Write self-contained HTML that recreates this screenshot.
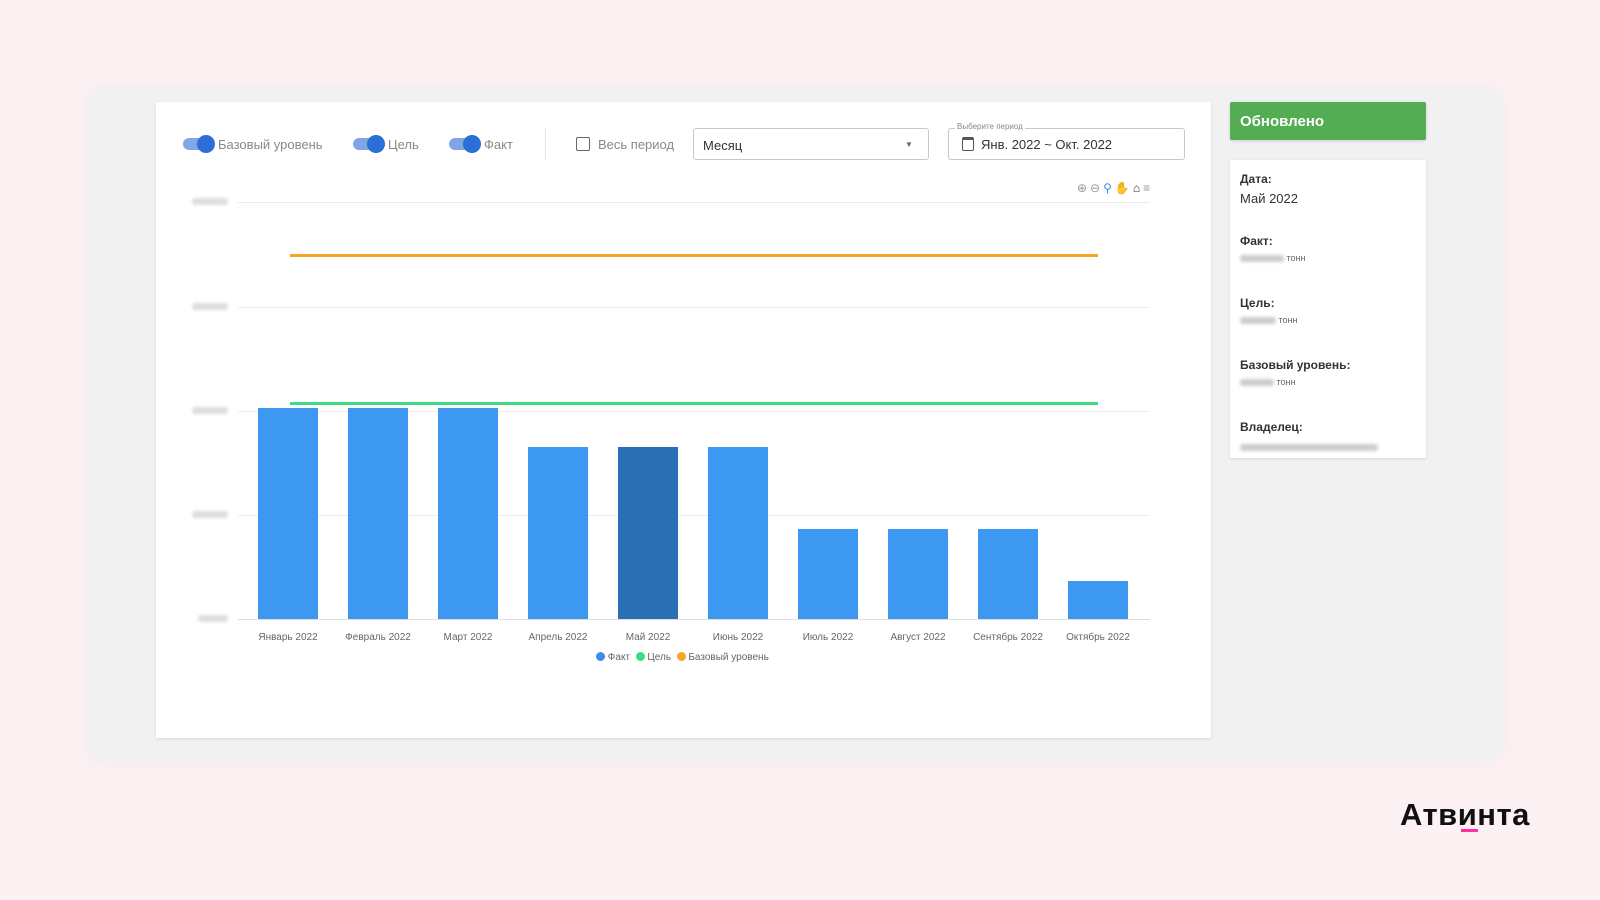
<!DOCTYPE html>
<html><head><meta charset="utf-8"><style>
*{margin:0;padding:0;box-sizing:border-box}
body{width:1600px;height:900px;background:#fdf2f3;font-family:"Liberation Sans",sans-serif;position:relative;overflow:hidden}
.abs{position:absolute}
.gray{left:87px;top:87px;width:1415px;height:676px;background:#f1f1f1;border-radius:18px;box-shadow:0 0 20px rgba(0,0,0,.04)}
.card{left:156px;top:102px;width:1055px;height:636px;background:#fff;box-shadow:0 1px 3px rgba(0,0,0,.1)}
.tog{width:30px;height:12px;border-radius:6px;background:#7fa7e6}
.tog::after{content:"";position:absolute;right:-2px;top:-3px;width:18px;height:18px;border-radius:50%;background:#2c6fd6}
.lbl{font-size:13px;color:#888}
.sel{border:1px solid #c8c8c8;border-radius:3px;background:#fff}
.xl{font-size:10px;color:#666;width:90px;text-align:center;top:632px}
.grid{left:238px;width:912px;height:1px;background:#ececec}
.bar{width:60px;background:#3d98f2;bottom:281px}
.yl{left:192px;width:36px;height:7px;background:#ddd;border-radius:3px;filter:blur(1.5px)}
.info b{display:block;font-size:12px;color:#333;margin-bottom:5px}
.blur{display:inline-block;height:7px;background:#ccc;border-radius:3px;filter:blur(1.5px);vertical-align:middle}
</style></head><body>
<div class="abs gray"></div>
<div class="abs card"></div>
<div class="abs tog" style="left:183px;top:138px"></div><div class="abs lbl" style="left:218px;top:137px">Базовый уровень</div>
<div class="abs tog" style="left:353px;top:138px"></div><div class="abs lbl" style="left:388px;top:137px">Цель</div>
<div class="abs tog" style="left:449px;top:138px"></div><div class="abs lbl" style="left:484px;top:137px">Факт</div>
<div class="abs" style="left:545px;top:128px;width:1px;height:32px;background:#e5e5e5"></div>
<div class="abs" style="left:576px;top:137px;width:14px;height:14px;border:1.5px solid #666;border-radius:2px"></div>
<div class="abs lbl" style="left:598px;top:137px">Весь период</div>
<div class="abs sel" style="left:693px;top:128px;width:236px;height:32px"></div>
<div class="abs" style="left:703px;top:138px;font-size:13px;color:#333">Месяц</div>
<div class="abs" style="left:905px;top:140px;font-size:8px;color:#666">▼</div>
<div class="abs sel" style="left:948px;top:128px;width:237px;height:32px"></div>
<div class="abs" style="left:955px;top:122px;background:#fff;padding:0 2px;font-size:8px;color:#888">Выберите период</div>
<div class="abs" style="left:962px;top:137px;width:12px;height:14px;border:1.5px solid #555;border-radius:2px;border-top-width:3px"></div>
<div class="abs" style="left:981px;top:137px;font-size:13px;color:#333">Янв. 2022 ~ Окт. 2022</div>
<div class="abs" style="left:1077px;top:181px;font-size:12px;color:#999;letter-spacing:3px">⊕⊖<span style="color:#3d8de8">⚲</span>✋<span style="color:#333">⌂</span>≡</div>
<div class="abs grid" style="top:202px"></div><div class="abs grid" style="top:307px"></div><div class="abs grid" style="top:411px"></div><div class="abs grid" style="top:515px"></div><div class="abs grid" style="top:619px;background:#ddd"></div>
<div class="abs yl" style="top:198px"></div><div class="abs yl" style="top:303px"></div><div class="abs yl" style="top:407px"></div><div class="abs yl" style="top:511px"></div><div class="abs yl" style="top:615px;left:198px;width:30px"></div>
<div class="abs bar" style="left:258px;top:408px"></div>
<div class="abs bar" style="left:348px;top:408px"></div>
<div class="abs bar" style="left:438px;top:408px"></div>
<div class="abs bar" style="left:528px;top:447px"></div>
<div class="abs bar" style="left:618px;top:447px;background:#2a6fb3"></div>
<div class="abs bar" style="left:708px;top:447px"></div>
<div class="abs bar" style="left:798px;top:529px"></div>
<div class="abs bar" style="left:888px;top:529px"></div>
<div class="abs bar" style="left:978px;top:529px"></div>
<div class="abs bar" style="left:1068px;top:581px"></div>
<div class="abs" style="left:290px;top:254px;width:808px;height:3px;background:#f5a623"></div>
<div class="abs" style="left:290px;top:402px;width:808px;height:3px;background:#3ddc84"></div>
<div class="abs xl" style="left:243px">Январь 2022</div><div class="abs xl" style="left:333px">Февраль 2022</div><div class="abs xl" style="left:423px">Март 2022</div><div class="abs xl" style="left:513px">Апрель 2022</div><div class="abs xl" style="left:603px">Май 2022</div><div class="abs xl" style="left:693px">Июнь 2022</div><div class="abs xl" style="left:783px">Июль 2022</div><div class="abs xl" style="left:873px">Август 2022</div><div class="abs xl" style="left:963px">Сентябрь 2022</div><div class="abs xl" style="left:1053px">Октябрь 2022</div>
<div class="abs" style="left:596px;top:652px;font-size:10px;color:#666;white-space:nowrap">
<span style="display:inline-block;width:9px;height:9px;border-radius:50%;background:#3d8de8;vertical-align:-1px"></span> Факт &nbsp;<span style="display:inline-block;width:9px;height:9px;border-radius:50%;background:#3ddc84;vertical-align:-1px"></span> Цель &nbsp;<span style="display:inline-block;width:9px;height:9px;border-radius:50%;background:#f5a623;vertical-align:-1px"></span> Базовый уровень</div>
<div class="abs" style="left:1230px;top:102px;width:196px;height:38px;background:#53ad52;border-radius:2px;color:#fff;font-weight:bold;font-size:15px;padding:11px 10px;box-shadow:0 1px 3px rgba(0,0,0,.15)">Обновлено</div>
<div class="abs info" style="left:1230px;top:160px;width:196px;height:298px;background:#fff;border-radius:2px;box-shadow:0 1px 3px rgba(0,0,0,.12);padding:12px 10px">
<b>Дата:</b><div style="font-size:13px;color:#333;height:43px">Май 2022</div>
<b>Факт:</b><div style="font-size:9px;color:#666;height:43px"><span class="blur" style="width:44px"></span> тонн</div>
<b>Цель:</b><div style="font-size:9px;color:#666;height:43px"><span class="blur" style="width:36px"></span> тонн</div>
<b>Базовый уровень:</b><div style="font-size:9px;color:#666;height:43px"><span class="blur" style="width:34px"></span> тонн</div>
<b>Владелец:</b><div><span class="blur" style="width:138px"></span></div>
</div>
<div class="abs" style="left:1400px;top:797px;font-size:31px;font-weight:bold;color:#111;letter-spacing:0.5px">Атвинта</div>
<div class="abs" style="left:1461px;top:829px;width:17px;height:3px;background:#ff2fa8"></div>
</body></html>
